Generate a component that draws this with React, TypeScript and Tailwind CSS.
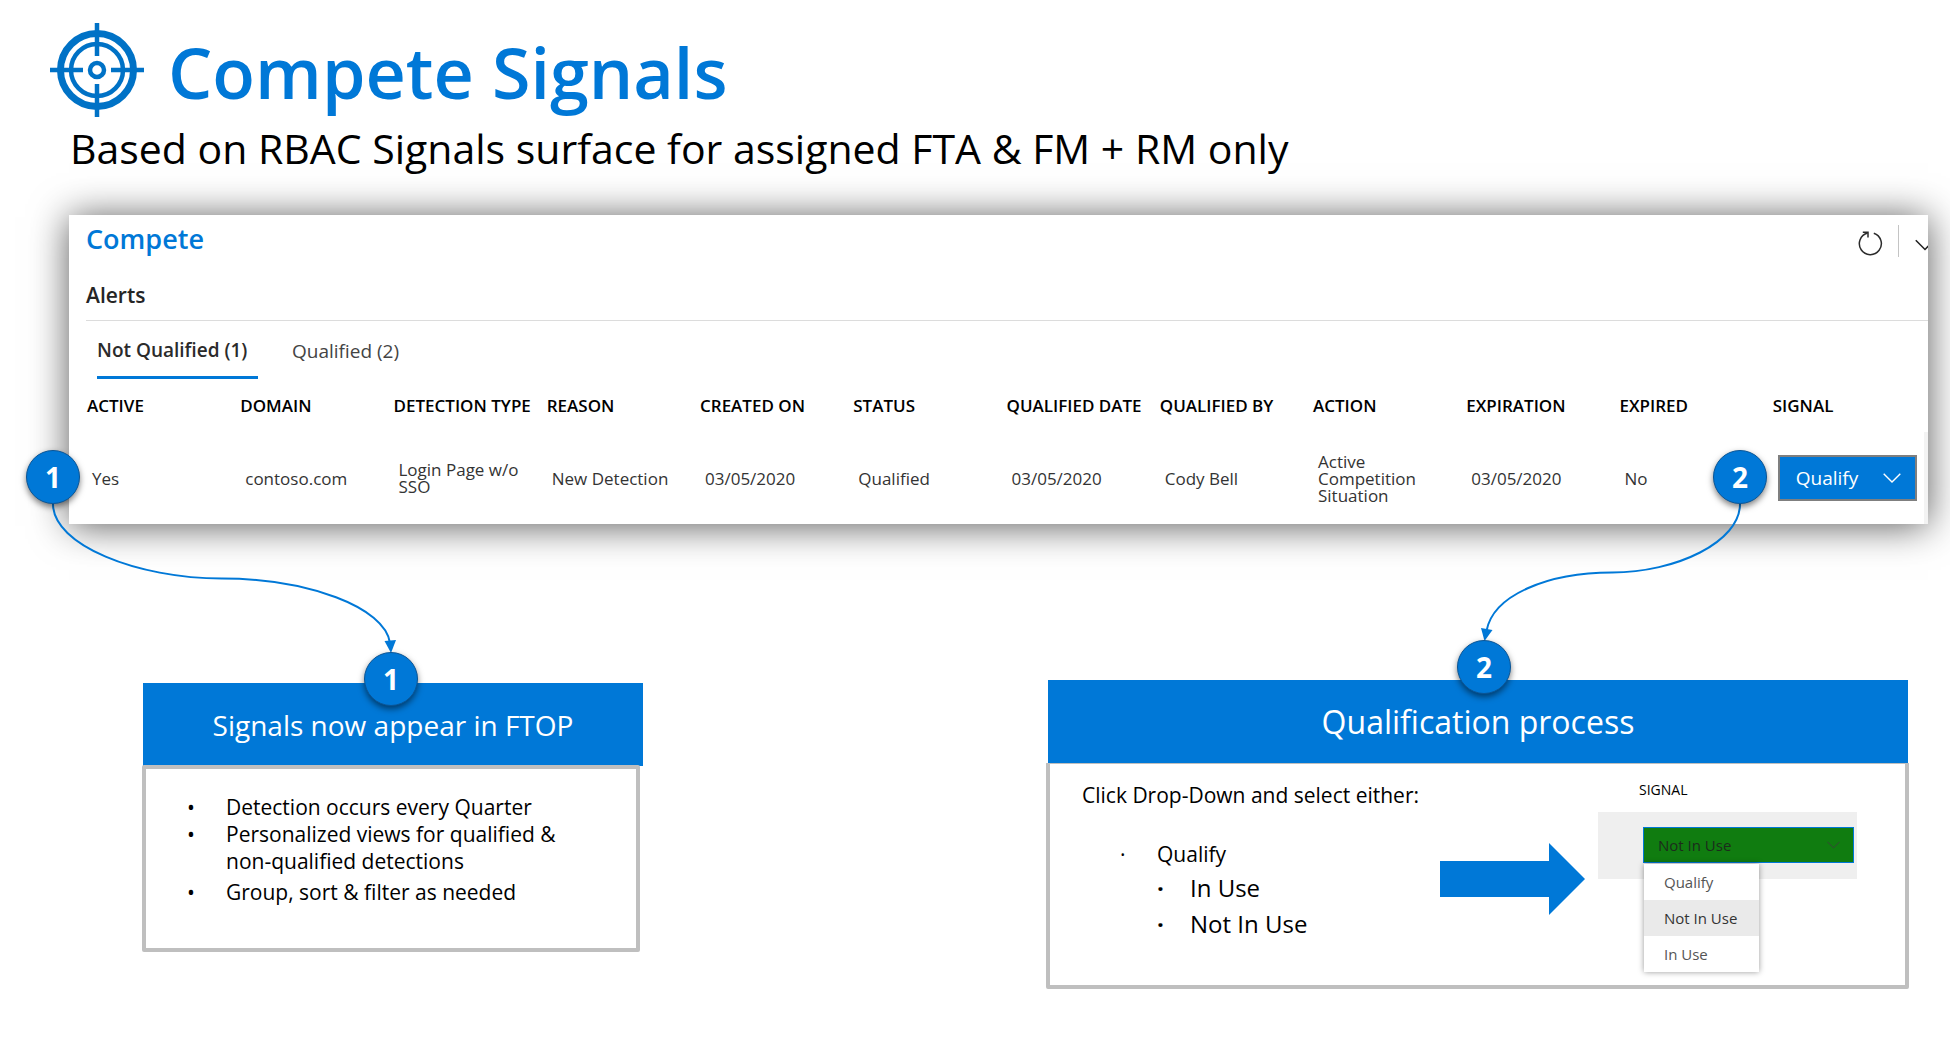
import React from "react";

const columns = [
  "ACTIVE",
  "DOMAIN",
  "DETECTION TYPE",
  "REASON",
  "CREATED ON",
  "STATUS",
  "QUALIFIED DATE",
  "QUALIFIED BY",
  "ACTION",
  "EXPIRATION",
  "EXPIRED",
  "SIGNAL",
];

const row = [
  "Yes",
  "contoso.com",
  "Login Page w/o SSO",
  "New Detection",
  "03/05/2020",
  "Qualified",
  "03/05/2020",
  "Cody Bell",
  "Active Competition Situation",
  "03/05/2020",
  "No",
];

function TargetIcon() {
  return (
    <svg viewBox="0 0 94 94" className="size-[94px] shrink-0" fill="none" stroke="#0072c6" aria-hidden="true">
      <circle cx="47" cy="47" r="36.5" strokeWidth="7" />
      <circle cx="47" cy="47" r="26" strokeWidth="4.5" />
      <circle cx="47" cy="47" r="7" strokeWidth="4.5" />
      <path d="M47 0V33M47 61V94M0 47H33M61 47H94" strokeWidth="4.5" />
    </svg>
  );
}

function RefreshIcon() {
  return (
    <svg viewBox="0 0 26 26" className="size-[26px]" fill="none" stroke="#2b2b2b" strokeWidth="1.5" aria-hidden="true">
      <path d="M15.8 3.2A11 11 0 1 1 9.600 3" />
      <path d="M4.800 2.200H10V7.400" />
    </svg>
  );
}

function Chevron({ className }: { className: string }) {
  return (
    <svg viewBox="0 0 18 10" className={className} fill="none" stroke="currentColor" strokeWidth="1.4" aria-hidden="true">
      <path d="M0.7 0.7L9 9L17.3 0.7" />
    </svg>
  );
}

function Badge({ n, className }: { n: number; className: string }) {
  return (
    <span
      className={
        "absolute z-10 flex size-[54px] items-center justify-center rounded-full border border-[#0a5596] bg-[#0078d7] text-[28px] font-bold leading-none text-white shadow-[0_3px_6px_rgba(0,0,0,0.5)] " +
        className
      }
    >
      {n}
    </span>
  );
}

function CardTitle({ className, children }: { className: string; children: React.ReactNode }) {
  return (
    <h2 className={"relative flex h-[83px] items-center justify-center bg-[#0078d7] text-white " + className}>
      {children}
    </h2>
  );
}

export default function App() {
  return (
    <main className="min-h-screen overflow-x-hidden bg-white pb-8 font-['Open_Sans','Noto_Sans',sans-serif] text-black">
      <header>
        <div className="flex items-center gap-6 pl-[50px] pt-[23px]">
          <TargetIcon />
          <h1 className="pt-1 text-[70px] font-semibold leading-[90px] text-[#0078d7]">Compete Signals</h1>
        </div>
        <p className="mt-[5px] pl-[70px] text-[41px] leading-[52px]">
          Based on RBAC Signals surface for assigned FTA &amp; FM + RM only
        </p>
      </header>

      <section className="relative ml-[69px] mr-[22px] mt-[41px] bg-white shadow-[0_2px_36px_rgba(0,0,0,0.65)]">
        <div className="flex h-12 items-center justify-between overflow-hidden pl-[17px]">
          <h2 className="text-[27px] font-semibold leading-[46px] text-[#0078d7]">Compete</h2>
          <div className="-mr-[7px] flex h-full items-center pt-[4px]">
            <button aria-label="Refresh" className="mr-[14px] pt-[4px]">
              <RefreshIcon />
            </button>
            <span className="mr-4 h-8 w-px bg-[#c4c4c4]" />
            <button aria-label="Collapse" className="pt-[7px] text-[#222]">
              <Chevron className="h-[12px] w-[20px]" />
            </button>
          </div>
        </div>
        <h3 className="ml-[17px] mt-[18px] border-b border-[#dcdcdc] pb-[11px] text-[21px] font-semibold leading-7 text-[#252525]">
          Alerts
        </h3>
        <div role="tablist" className="flex gap-[34px] pl-7 pt-[17px] text-[19px] leading-6">
          <button
            role="tab"
            aria-selected="true"
            className="w-[161px] whitespace-nowrap border-b-[3px] border-[#0078d7] pb-[14px] text-left font-semibold text-[#2b2b2b]"
          >
            Not Qualified (1)
          </button>
          <button role="tab" aria-selected="false" className="pb-4 text-[#444]">
            Qualified (2)
          </button>
        </div>
        <div className="pl-[18px]">
          <table className="w-full table-fixed text-left">
            <thead>
              <tr className="h-[53px]">
                {columns.map((c) => (
                  <th key={c} className="whitespace-nowrap text-[17px] font-semibold">
                    {c}
                  </th>
                ))}
              </tr>
            </thead>
            <tbody>
              <tr className="h-[92px]">
                {row.map((c, i) => (
                  <td key={i} className="pl-[5px] pr-5 text-[17px] leading-[17px] text-[#333]">
                    {c}
                  </td>
                ))}
                <td className="border-r-4 border-[#f3f3f3] pl-[5px] pr-[7px]">
                  <div className="relative text-white">
                    <select
                      aria-label="Signal"
                      className="block h-[46px] w-full appearance-none border-2 border-[#7f7f7f] bg-[#0078d7] pl-4 text-[19px]"
                    >
                      <option>Qualify</option>
                      <option>Not In Use</option>
                      <option>In Use</option>
                    </select>
                    <Chevron className="pointer-events-none absolute right-4 top-[18px] h-[10px] w-[18px]" />
                  </div>
                </td>
              </tr>
            </tbody>
          </table>
        </div>

        <svg
          viewBox="0 0 360 160"
          className="pointer-events-none absolute -left-[17px] top-[288px] h-[160px] w-[360px]"
          fill="none"
          aria-hidden="true"
        >
          <path d="M1 1C1 42 85 75.500 170 75.500S333 104 338 140" stroke="#0078d7" strokeWidth="2" />
          <path d="M332.500 138L344 137L339 150Z" fill="#0078d7" />
        </svg>
        <svg
          viewBox="0 0 270 150"
          className="pointer-events-none absolute right-[187px] top-[288px] h-[150px] w-[270px]"
          fill="none"
          aria-hidden="true"
        >
          <path d="M269 1C269 39 205 69.500 141 69.500S22 92 15.500 128" stroke="#0078d7" strokeWidth="2" />
          <path d="M10 125L21.500 127L13.500 138Z" fill="#0078d7" />
        </svg>
        <Badge n={1} className="-left-[43px] top-[235px]" />
        <Badge n={2} className="right-[161px] top-[235px]" />
      </section>

      <div className="ml-[142px] mr-[41px] mt-[156px] grid grid-cols-[501fr_403fr_863fr] items-start">
        <section className="mt-[3px]">
          <CardTitle className="ml-px text-[28px]">
            <Badge n={1} className="-top-[31px] left-[221px]" />
            Signals now appear in FTOP
          </CardTitle>
          <div className="relative -mt-px mr-[3px] h-[187px] rounded-xs border-4 border-[#bfbfbf] bg-white pl-[41px] pr-8 pt-[25px] text-[21px] leading-[27px]">
            <ul className="flex flex-col">
              <li className="flex gap-[33px]">
                <span className="w-[6px]">•</span>
                <span>Detection occurs every Quarter</span>
              </li>
              <li className="flex gap-[33px]">
                <span className="w-[6px]">•</span>
                <span>
                  Personalized views for qualified &amp;
                  <br />
                  non-qualified detections
                </span>
              </li>
              <li className="mt-1 flex gap-[33px]">
                <span className="w-[6px]">•</span>
                <span>Group, sort &amp; filter as needed</span>
              </li>
            </ul>
          </div>
        </section>

        <section className="col-start-3">
          <CardTitle className="ml-[2px] mr-px text-[32px]">
            <Badge n={2} className="-top-[40px] right-[397px]" />
            Qualification process
          </CardTitle>
          <div className="flex h-[226px] rounded-b-xs border-4 border-t border-[#bfbfbf] pl-8 pr-[48px]">
            <div className="flex-1 pt-[17px] text-[21px] leading-7">
              <p>Click Drop-Down and select either:</p>
              <ul className="mt-[31px] pl-[38px]">
                <li>
                  <div className="flex gap-[31px]">
                    <span className="w-[6px]">·</span>
                    <span>Qualify</span>
                  </div>
                  <ul className="mt-[6px] flex flex-col gap-2 pl-[37px] text-[24px]">
                    <li className="flex gap-[27px]">
                      <span className="w-[6px] font-bold">·</span>
                      <span>In Use</span>
                    </li>
                    <li className="flex gap-[27px]">
                      <span className="w-[6px] font-bold">·</span>
                      <span>Not In Use</span>
                    </li>
                  </ul>
                </li>
              </ul>
            </div>
            <svg viewBox="0 0 145 72" className="mr-[13px] mt-[79px] h-[72px] w-[145px] shrink-0" aria-hidden="true">
              <path d="M0 18H109V0L145 36L109 72V54H0Z" fill="#0078d7" />
            </svg>
            <div className="w-[259px] shrink-0 pt-4">
              <label htmlFor="signal" className="block pl-[41px] text-[14px] font-medium leading-5">
                SIGNAL
              </label>
              <div className="mt-3 h-[67px] bg-[#efefef] pl-[45px] pr-[3px] pt-[15px]">
                <div className="relative text-[15px]">
                  <select
                    id="signal"
                    defaultValue="Not In Use"
                    className="block h-9 w-full appearance-none border border-[#0078d7] bg-[#107c10] pl-[14px] text-[#1c2c1c]"
                  >
                    <option>Qualify</option>
                    <option>Not In Use</option>
                    <option>In Use</option>
                  </select>
                  <Chevron className="pointer-events-none absolute right-[14px] top-[14px] h-[8px] w-[13px] text-[#2c552c]" />
                  <div className="absolute left-px top-[37px] flex w-[115px] flex-col bg-white text-[#555] shadow-[0_0_6px_rgba(0,0,0,0.4)]">
                    <button className="h-9 pl-5 text-left">Qualify</button>
                    <button className="h-9 bg-[#eaeaea] pl-5 text-left text-[#333]">Not In Use</button>
                    <button className="h-9 pl-5 text-left">In Use</button>
                  </div>
                </div>
              </div>
            </div>
          </div>
        </section>
      </div>
    </main>
  );
}
